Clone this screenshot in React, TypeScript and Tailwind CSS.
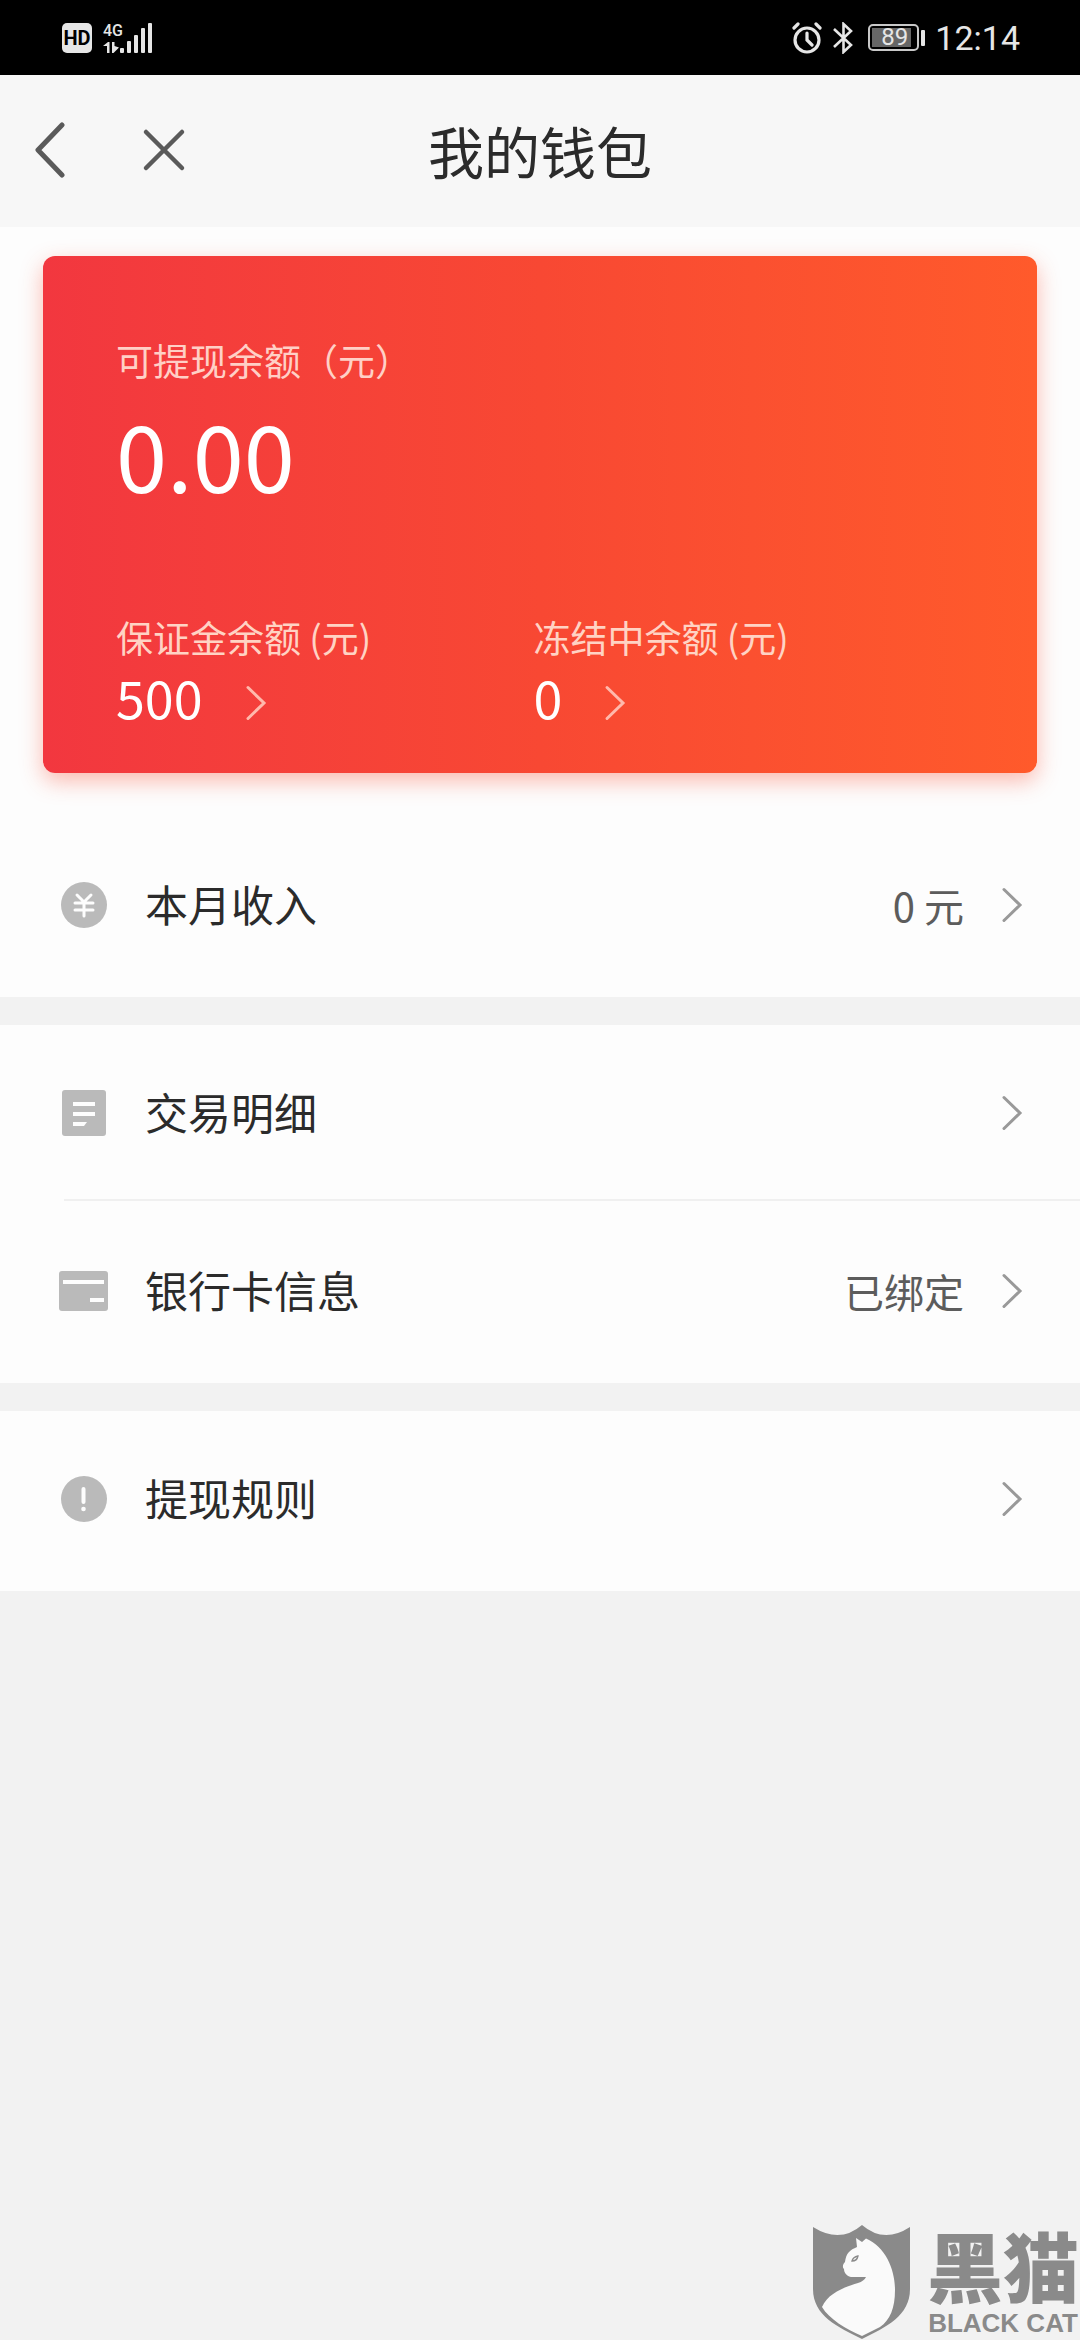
import type { ReactNode } from "react";

function Chevron({ className }: { className: string }) {
  return (
    <svg viewBox="0 0 22 36" className={`h-9 w-[22px] shrink-0 ${className}`} fill="none" stroke="currentColor" strokeWidth="3" strokeLinecap="round">
      <path d="M3 2.5 19 18 3 33.5" />
    </svg>
  );
}

function StatusBar() {
  return (
    <div className="flex h-[75px] items-center justify-between bg-black pr-[60px] pl-[62px] text-[#e6e6e6]">
      <div className="flex items-center">
        <span className="flex h-[30px] w-[30px] items-center justify-center rounded-[5px] bg-[#e6e6e6] font-['Roboto',sans-serif] text-[20px] leading-[30px] font-bold text-black">HD</span>
        <div className="ml-[11px] flex h-8 w-[17px] flex-col justify-between">
          <span className="font-['Roboto',sans-serif] text-[16px] leading-[18px] font-medium">4G</span>
          <svg viewBox="0 0 17 12" className="h-3 w-[17px]" fill="currentColor">
            <path d="M0 4 5 0h1.5v11H4V4zM9 0h2.500v4L16 5.500 10.500 11H9z" />
          </svg>
        </div>
        <svg viewBox="0 0 32 32" className="h-8 w-8" fill="currentColor">
          <rect x="0" y="26" width="4" height="5" rx="1" />
          <rect x="7" y="19" width="4" height="12" rx="1" />
          <rect x="14" y="13" width="4" height="18" rx="1" />
          <rect x="21" y="6" width="4" height="25" rx="1" />
          <rect x="28" y="1" width="4" height="30" rx="1" />
        </svg>
      </div>
      <div className="flex items-center">
        <svg viewBox="0 0 30 32" className="h-8 w-[30px]" fill="none" stroke="currentColor" strokeWidth="3.200" strokeLinecap="round">
          <circle cx="15" cy="18" r="12" />
          <path d="M15 11v7l5 5M2 6 6 2M28 6 24 2" />
        </svg>
        <svg viewBox="0 0 20 32" className="ml-[11px] h-8 w-5" fill="none" stroke="currentColor" strokeWidth="2.600">
          <path d="M1 7 18 23 10.500 30V2L18 9 1 25" />
        </svg>
        <span className="ml-[15px] flex h-[27px] w-[51px] rounded-[5px] border-2 border-[#c8c8c8] p-[2px]">
          <span className="flex w-[39px] items-center justify-center bg-[#666] pl-[6px] font-['Roboto',sans-serif] text-[24px] leading-[19px]">89</span>
        </span>
        <span className="ml-[2px] h-4 w-1 rounded-[1px] bg-[#e6e6e6]" />
        <span className="ml-[10px] font-['Roboto',sans-serif] text-[34px] leading-10">12:14</span>
      </div>
    </div>
  );
}

function Header() {
  return (
    <header className="grid h-[152px] grid-cols-[1fr_auto_1fr] items-center bg-[#f7f7f7] pb-0.5 text-[#5a5a5a]">
      <div className="flex items-center pl-[34px]">
        <button type="button" aria-label="返回">
          <svg viewBox="0 0 32 56" className="h-14 w-8" fill="none" stroke="currentColor" strokeWidth="5" strokeLinecap="round" strokeLinejoin="round">
            <path d="M28 3 4 28l24 25" />
          </svg>
        </button>
        <button type="button" aria-label="关闭" className="ml-[76px]">
          <svg viewBox="0 0 44 44" className="h-11 w-11" fill="none" stroke="currentColor" strokeWidth="4.500" strokeLinecap="round">
            <path d="m4 4 36 36M40 4 4 40" />
          </svg>
        </button>
      </div>
      <h1 className="text-[56px] leading-[72px] text-[#2b2b2b]">我的钱包</h1>
    </header>
  );
}

function SubBalance({ label, value }: { label: string; value: string }) {
  return (
    <div>
      <p className="text-[37px] leading-[48px] text-[#ffd3c4]">{label}</p>
      <button type="button" className="mt-1 flex items-center gap-[42px] text-[52px] leading-[64px]">
        {value}
        <Chevron className="mt-3 text-[#ffb9ac]" />
      </button>
    </div>
  );
}

function BalanceCard() {
  return (
    <section className="mx-[43px] rounded-xl bg-linear-to-r from-[#f2373f] via-[#f84833] to-[#ff5a2b] pt-20 pr-[86px] pb-11 pl-[73px] text-white shadow-[0_8px_22px_rgba(250,75,50,0.38)]">
      <p className="text-[37px] leading-[48px] text-[#ffd0c6]">可提现余额（元）</p>
      <p className="mt-[17px] text-[92px] leading-[104px]">0.00</p>
      <div className="mt-[108px] grid grid-cols-2">
        <SubBalance label="保证金余额 (元)" value="500" />
        <SubBalance label="冻结中余额 (元)" value="0" />
      </div>
    </section>
  );
}

function Row({ icon, label, value, divided }: { icon: ReactNode; label: string; value?: string; divided?: boolean }) {
  return (
    <button type="button" className="relative flex h-[176px] w-full items-center pr-[57px] pl-[58px] text-left">
      <span className="flex w-[51px] shrink-0 justify-center">{icon}</span>
      <span className="ml-[36px] grow pb-1 text-[43px] leading-[60px] text-[#2b2b2b]">{label}</span>
      {value && <span className="text-[40px] leading-[60px] text-[#5c5c5c]">{value}</span>}
      <Chevron className="ml-[37px] text-[#999]" />
      {divided && <span className="absolute right-0 bottom-0 left-[64px] h-[2px] bg-[#f0f0f0]" />}
    </button>
  );
}

const YenIcon = () => (
  <svg viewBox="0 0 46 46" className="h-[46px] w-[46px]">
    <circle cx="23" cy="23" r="23" fill="#bababa" />
    <path d="m16 13 7 7 7-7M14 21h18M14 28h18M23 20v14" fill="none" stroke="#fdfdfd" strokeWidth="3" strokeLinecap="round" />
  </svg>
);

const ListIcon = () => (
  <svg viewBox="0 0 44 46" className="h-[46px] w-11">
    <rect width="44" height="46" rx="3" fill="#bababa" />
    <path d="M11 12h22v4H11zM11 22h22v4H11zM11 32h14l-3 4H11z" fill="#fdfdfd" />
  </svg>
);

const CardIcon = () => (
  <svg viewBox="0 0 49 40" className="h-10 w-[49px]">
    <rect width="49" height="40" rx="3" fill="#bababa" />
    <path d="M4 9h41v4H4zM31 27h14v4H31z" fill="#fdfdfd" />
  </svg>
);

const AlertIcon = () => (
  <svg viewBox="0 0 46 46" className="h-[46px] w-[46px]">
    <circle cx="23" cy="23" r="23" fill="#bababa" />
    <path d="M22.500 13v13" stroke="#fdfdfd" strokeWidth="4" strokeLinecap="round" />
    <circle cx="22.500" cy="33" r="2.300" fill="#fdfdfd" />
  </svg>
);

function Watermark() {
  return (
    <div className="mt-auto flex items-end self-end pr-px text-[#8a8a8a]">
      <svg viewBox="0 0 98 116" className="h-[116px] w-[98px]">
        <path d="M0 3Q27 20 49 1 71 20 97 3V65C97 92 73 103 49 115 25 103 0 92 0 65Z" fill="currentColor" />
        <path
          d="M43 14 49 18 53 14.500C73 23 82 46 82 66 82 84 77 96 67 103L49 112C33 105 16 95 9 83 15 69 32 63 45 59Q51 57 53 53H38C33 52 31 48 31 45 29 43 30 40 32 38 33 29 37 26 44 23Z"
          fill="#fafafa"
        />
        <path d="M39 37q1-4 6-5-1 5-6 5z" fill="none" stroke="currentColor" strokeWidth="1.300" />
      </svg>
      <div className="ml-4 flex flex-col items-center pb-0.5">
        <span className="text-[76px] leading-[88px] font-black">黑猫</span>
        <span className="font-['Liberation_Sans',sans-serif] text-[26px] leading-[30px] font-bold">BLACK CAT</span>
      </div>
    </div>
  );
}

export default function App() {
  return (
    <div className="flex min-h-screen flex-col bg-[#f2f2f2] font-['Noto_Sans_CJK_SC',sans-serif]">
      <StatusBar />
      <Header />
      <main className="flex flex-col gap-7">
        <div className="bg-[#fdfdfd] pt-[29px] pb-1">
          <BalanceCard />
          <div className="mt-11">
            <Row icon={<YenIcon />} label="本月收入" value="0 元" />
          </div>
        </div>
        <div className="bg-[#fdfdfd] pb-1">
          <Row icon={<ListIcon />} label="交易明细" divided />
          <div className="pt-0.5">
            <Row icon={<CardIcon />} label="银行卡信息" value="已绑定" />
          </div>
        </div>
        <div className="bg-[#fdfdfd] pb-1">
          <Row icon={<AlertIcon />} label="提现规则" />
        </div>
      </main>
      <Watermark />
    </div>
  );
}
